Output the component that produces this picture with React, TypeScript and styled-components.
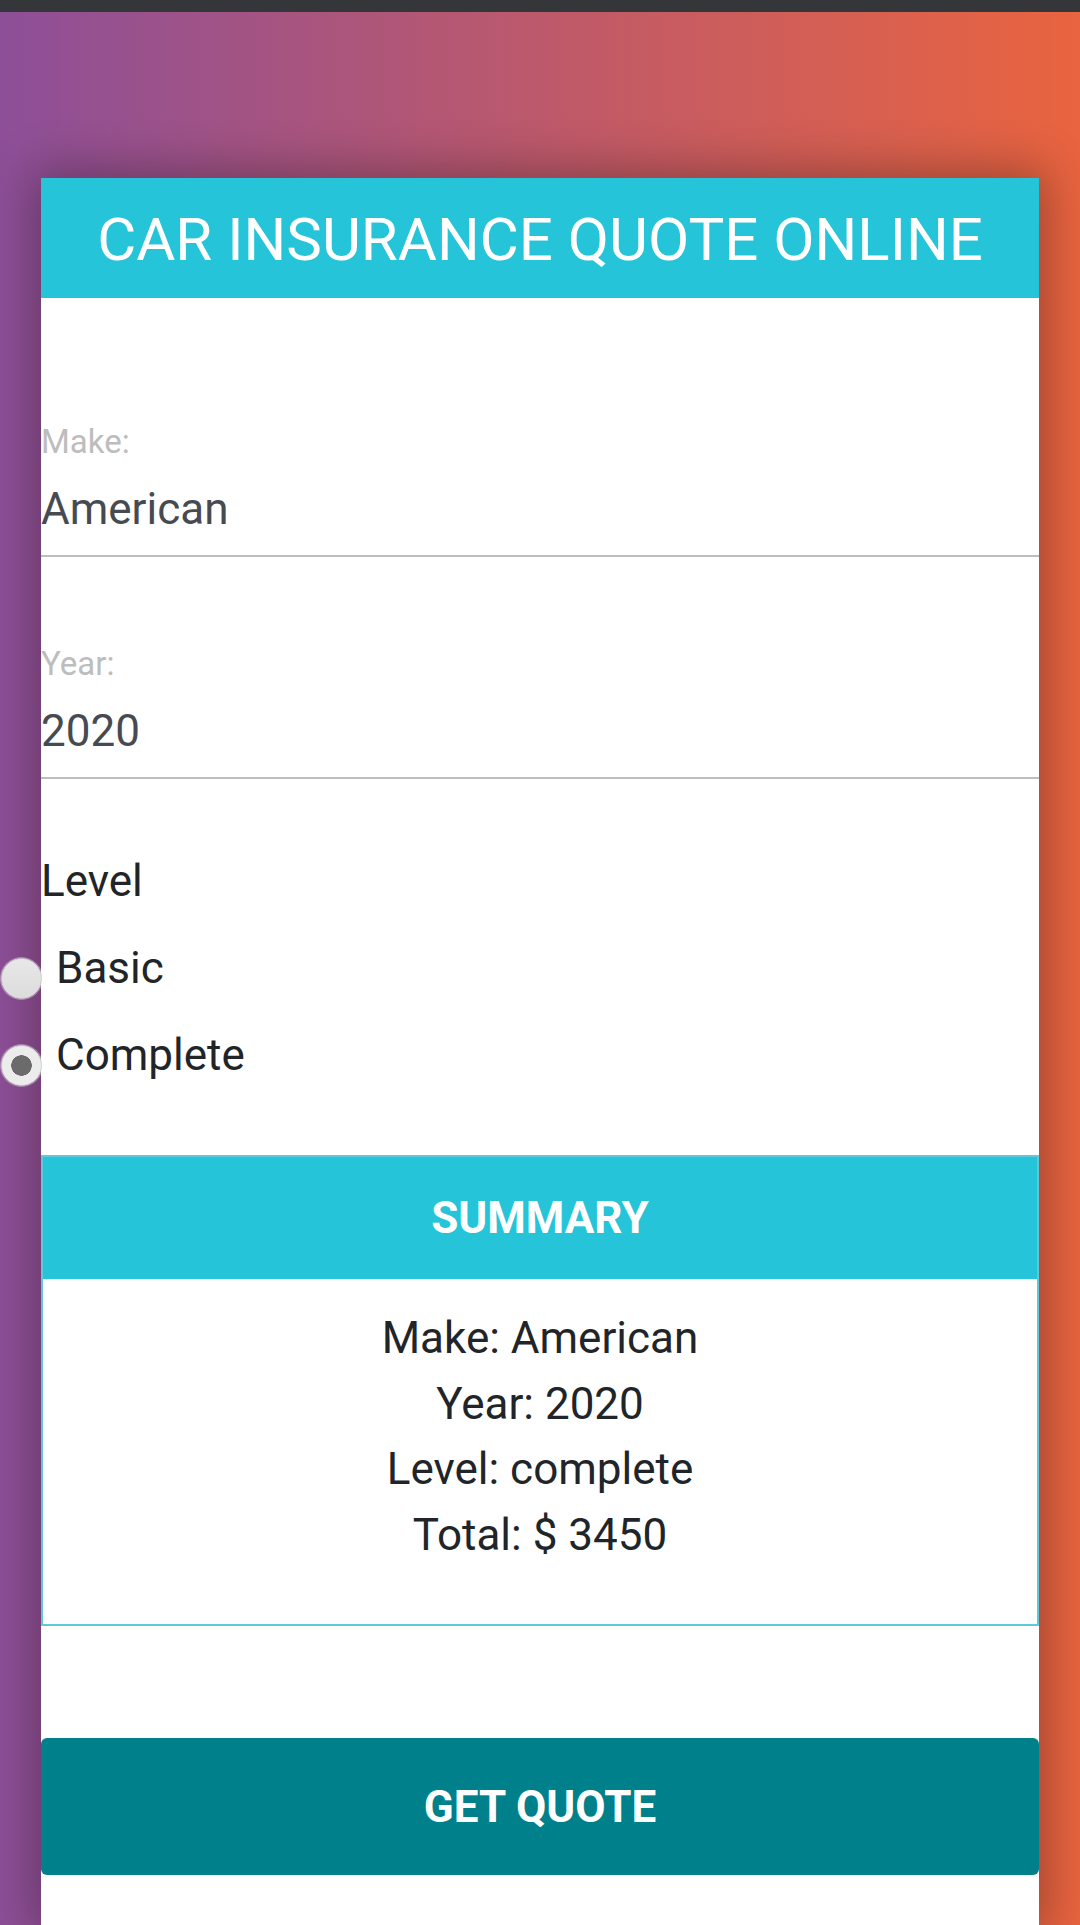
import React from "react";
import styled, { createGlobalStyle } from "styled-components";

const Global = createGlobalStyle`
  html, body { margin: 0; padding: 0; }
  body {
    font-family: Roboto, "Noto Sans", Arial, sans-serif;
    background: #35363a;
    overflow: hidden;
  }
  * { box-sizing: border-box; }
`;

const TopBar = styled.div`
  height: 12px;
  background: #35363a;
`;

const Page = styled.div`
  min-height: 1913px;
  background: linear-gradient(to right, #8d4f98 0%, #bd596b 50%, #e9643f 100%);
  padding-top: 166px;
`;

const Card = styled.div`
  width: 998px;
  margin: 0 0 0 41px;
  background: #ffffff;
  box-shadow: 0 0 45px 8px rgba(0, 0, 0, 0.3);
  padding-bottom: 52px;
`;

const Header = styled.h1`
  margin: 0;
  background: #26c4d9;
  color: #ffffff;
  font-weight: 400;
  font-size: 60px;
  line-height: 70px;
  padding: 27px 0 23px;
  text-align: center;
`;

const Form = styled.div`
  padding-top: 124px;
`;

const Field = styled.div<{ $gap: number }>`
  margin-top: ${(p) => p.$gap}px;
  &:first-child { margin-top: 0; }
`;

const Label = styled.div`
  font-size: 33px;
  line-height: 40px;
  color: #bdbdbd;
`;

const Value = styled.div`
  margin-top: 21px;
  font-size: 44px;
  line-height: 52px;
  color: #464b51;
  padding-bottom: 20px;
  border-bottom: 2px solid #bdbdbd;
`;

const Legend = styled.div`
  margin-top: 76px;
  font-size: 44px;
  line-height: 52px;
  color: #212529;
`;

const RadioRow = styled.label`
  display: flex;
  align-items: flex-start;
  gap: 14px;
  height: 52px;
  margin-top: 35px;
  margin-left: -40px;
  font-size: 44px;
  line-height: 52px;
  color: #212529;
`;

const RadioDot = styled.span<{ $checked?: boolean }>`
  flex: none;
  width: 41px;
  height: 41px;
  margin-top: 16px;
  border-radius: 50%;
  border: 1px solid #cfcfcf;
  background: ${(p) =>
    p.$checked
      ? "radial-gradient(circle, #6b6b6b 0 10px, #ececec 10.5px)"
      : "linear-gradient(#e8e8e8, #dcdcdc)"};
  box-shadow: 0 0 0 1px rgba(255, 255, 255, 0.35);
`;

const Summary = styled.section`
  margin-top: 74px;
  border: 2px solid #5ec9d8;
`;

const SummaryHead = styled.h2`
  margin: 0;
  background: #26c4d9;
  color: #ffffff;
  font-size: 44px;
  font-weight: 700;
  line-height: 52px;
  padding: 35px 0;
  text-align: center;
`;

const SummaryBody = styled.div`
  padding: 27px 0 56px;
  text-align: center;
  font-size: 44px;
  line-height: 65.6px;
  color: #212529;
`;

const Line = styled.p`
  margin: 0;
`;

const QuoteButton = styled.button`
  display: block;
  width: 100%;
  height: 137px;
  margin-top: 112px;
  border: none;
  border-radius: 6px;
  background: #00808a;
  color: #ffffff;
  font-family: inherit;
  font-size: 44px;
  font-weight: 700;
  line-height: 52px;
  text-transform: uppercase;
`;

export default function App() {
  return (
    <>
      <Global />
      <TopBar />
      <Page>
        <Card>
          <Header>CAR INSURANCE QUOTE ONLINE</Header>
          <Form>
            <Field $gap={0}>
              <Label>Make:</Label>
              <Value>American</Value>
            </Field>
            <Field $gap={87}>
              <Label>Year:</Label>
              <Value>2020</Value>
            </Field>
            <Legend>Level</Legend>
            <RadioRow>
              <RadioDot />
              Basic
            </RadioRow>
            <RadioRow>
              <RadioDot $checked />
              Complete
            </RadioRow>
            <Summary>
              <SummaryHead>SUMMARY</SummaryHead>
              <SummaryBody>
                <Line>Make: American</Line>
                <Line>Year: 2020</Line>
                <Line>Level: complete</Line>
                <Line>Total: $ 3450</Line>
              </SummaryBody>
            </Summary>
            <QuoteButton>Get Quote</QuoteButton>
          </Form>
        </Card>
      </Page>
    </>
  );
}
